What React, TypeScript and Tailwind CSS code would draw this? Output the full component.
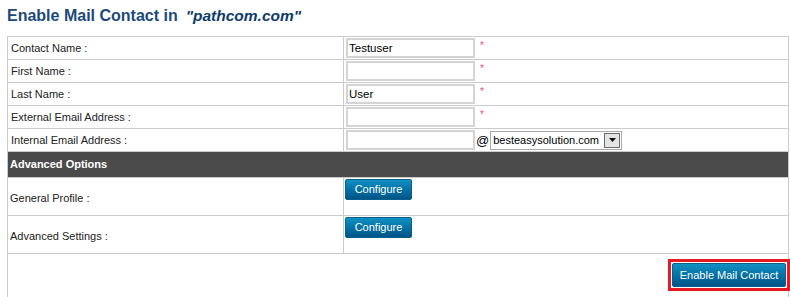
import React from 'react';

const FONT = { fontFamily: '"Liberation Sans", Arial, sans-serif' };

const rows = [
  { label: 'Contact Name :', value: 'Testuser', required: true },
  { label: 'First Name :', value: '', required: true },
  { label: 'Last Name :', value: 'User', required: true },
  { label: 'External Email Address :', value: '', required: true },
];

const BlueButton: React.FC<{ label: string; className?: string }> = ({ label, className = '' }) => (
  <button
    className={`rounded-[2px] border border-[#0a5f8e] bg-gradient-to-b from-[#1191c4] to-[#005486] text-[11px] leading-none text-white ${className}`}
    style={FONT}
  >
    {label}
  </button>
);

const TextBox: React.FC<{ value: string }> = ({ value }) => (
  <input
    readOnly
    value={value}
    className="h-[20px] w-[129px] border-2 border-[#d4d4d4] bg-white px-[1px] text-[11.5px] text-black outline-none"
    style={FONT}
  />
);

export default function App() {
  return (
    <div className="bg-white pl-[7px] pt-[6px] text-[11px] text-[#222]" style={FONT}>
      <h1 className="text-[16px] font-bold leading-[20px] text-[#1b4a7a]">
        Enable Mail Contact in
        <span className="ml-[8px] text-[15.5px] italic text-[#0d3c6a]">"pathcom.com"</span>
      </h1>
      <table className="mt-[10px] w-[782px] border-collapse border border-[#cbcbcb]">
        <tbody>
          {rows.map((r) => (
            <tr key={r.label} className="h-[23px]">
              <td className="w-[336px] border border-[#cbcbcb] px-[3px] align-middle">{r.label}</td>
              <td className="border border-[#cbcbcb] px-[2px] align-middle">
                <div className="flex items-center">
                  <TextBox value={r.value} />
                  {r.required && <span className="ml-[5px] -mt-[6px] text-[10px] text-[#f0507a]">*</span>}
                </div>
              </td>
            </tr>
          ))}
          <tr className="h-[23px]">
            <td className="border border-[#cbcbcb] px-[3px] align-middle">Internal Email Address :</td>
            <td className="border border-[#cbcbcb] px-[2px] align-middle">
              <div className="flex items-center">
                <TextBox value="" />
                <span className="ml-[1px] text-[13px] leading-none text-black">@</span>
                <div className="ml-[1px] flex h-[19px] w-[132px] items-center border border-[#a9a9a9] bg-white">
                  <span className="flex-1 pl-[2px] text-[11px] text-black">besteasysolution.com</span>
                  <span className="mr-[1px] flex h-[15px] w-[16px] items-center justify-center border border-[#6d6d6d] bg-[#e4e4e4]">
                    <svg width="7" height="4" viewBox="0 0 7 4">
                      <path d="M0 0h7L3.5 4z" fill="#111" />
                    </svg>
                  </span>
                </div>
              </div>
            </td>
          </tr>
          <tr className="h-[26px] bg-[#4b4b4b]">
            <td colSpan={2} className="border border-[#cbcbcb] px-[2px] text-[11px] font-bold text-white">
              Advanced Options
            </td>
          </tr>
          {['General Profile :', 'Advanced Settings :'].map((l) => (
            <tr key={l} className="h-[38px]">
              <td className="border border-[#cbcbcb] px-[2px] pt-[4px] align-middle">{l}</td>
              <td className="border border-[#cbcbcb] px-[1px] pt-[1px] align-top">
                <BlueButton label="Configure" className="h-[21px] w-[67px]" />
              </td>
            </tr>
          ))}
          <tr className="h-[50px]">
            <td colSpan={2} className="border border-[#cbcbcb] pr-0 pt-[5px] align-top">
              <div className="flex justify-end">
                <span className="-mr-[2px] inline-block border-[3px] border-[#e41b25] p-px">
                  <BlueButton label="Enable Mail Contact" className="block h-[24px] w-[114px]" />
                </span>
              </div>
            </td>
          </tr>
        </tbody>
      </table>
    </div>
  );
}
